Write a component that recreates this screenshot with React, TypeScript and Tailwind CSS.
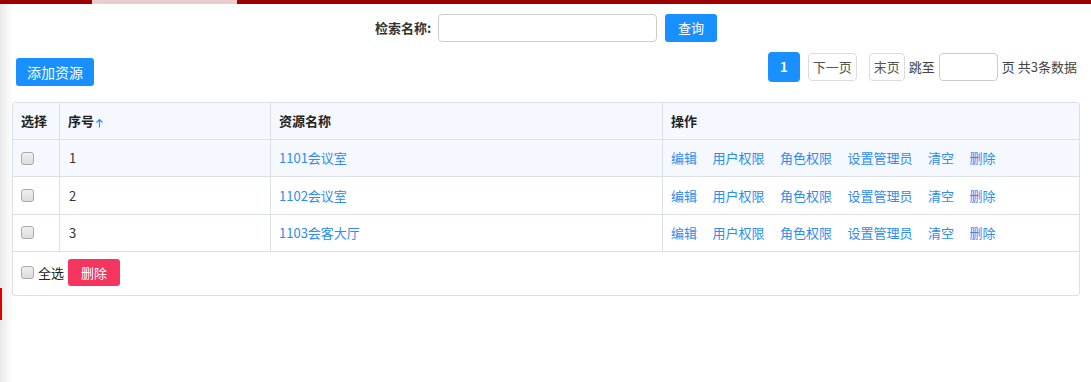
import React from 'react';

const rows = [
  { id: 1, name: '1101会议室' },
  { id: 2, name: '1102会议室' },
  { id: 3, name: '1103会客大厅' },
];

const actions = ['编辑', '用户权限', '角色权限', '设置管理员', '清空', '删除'];

function Box() {
  return (
    <span className="inline-block w-[13px] h-[13px] rounded-[3px] border border-[#a9a9a9] bg-gradient-to-b from-[#f0f0f0] to-[#dcdcdc] shrink-0" />
  );
}

function SortArrow() {
  return (
    <svg width="9" height="10" viewBox="0 0 9 10" className="ml-[1px] mt-[3px]">
      <path d="M4.5 1.5V9.5M1.5 4.5L4.5 1.5L7.5 4.5" fill="none" stroke="#2d8cf0" strokeWidth="1.2" />
    </svg>
  );
}

export default function App() {
  return (
    <div
      className="relative w-[1091px] h-[382px] bg-[linear-gradient(to_right,#e9e9e9,#ffffff_13px)] text-[13px] text-[#333]"
      style={{ fontFamily: '"Noto Sans CJK SC", "Noto Sans", sans-serif' }}
    >
      {/* top bar */}
      <div className="flex h-[4px]">
        <div className="w-[92px] bg-[#9c0000]" />
        <div className="w-[145px] bg-[#e9cccc]" />
        <div className="flex-1 bg-[#9c0000]" />
      </div>

      {/* search */}
      <div className="flex items-center justify-center gap-[7px] mt-[10px] h-[28px] pl-[1px]">
        <span className="font-bold text-[#333]">检索名称:</span>
        <input className="w-[219px] h-[28px] border border-[#cccccc] rounded-[4px] outline-none" />
        <button className="ml-[1px] w-[52px] h-[28px] bg-[#1890ff] text-white rounded-[3px] text-[13px]">查询</button>
      </div>

      {/* toolbar */}
      <div className="flex justify-between mt-[10px] h-[34px] pl-[16px] pr-[14px]">
        <button className="self-end w-[78px] h-[28px] bg-[#1890ff] text-white rounded-[3px] text-[14px]">添加资源</button>
        <div className="flex items-start">
          <span className="w-[32px] h-[30px] rounded-[4px] bg-[#1890ff] text-white font-bold flex items-center justify-center">1</span>
          <span className="ml-[8px] mt-[1px] w-[49px] h-[28px] border border-[#dcdcdc] rounded-[4px] flex items-center justify-center text-[#555]">下一页</span>
          <span className="ml-[12px] mt-[1px] w-[36px] h-[28px] border border-[#dcdcdc] rounded-[4px] flex items-center justify-center text-[#555]">末页</span>
          <span className="ml-[4px] h-[30px] flex items-center text-[#444]">跳至</span>
          <input className="ml-[4px] mt-[1px] w-[59px] h-[28px] border border-[#cccccc] rounded-[4px] outline-none" />
          <span className="ml-[4px] h-[30px] flex items-center text-[#444]">页</span>
          <span className="ml-[3px] h-[30px] flex items-center text-[#444]">共3条数据</span>
        </div>
      </div>

      {/* table */}
      <div className="ml-[12px] mt-[16px] w-[1068px] border border-[#dcdfe4] rounded-[3px] overflow-hidden">
        <div className="flex h-[37px] bg-[#f5f9ff] border-b border-[#dcdfe4] font-bold text-[#222]">
          <div className="w-[47px] border-r border-[#dcdfe4] pl-[8px] flex items-center">选择</div>
          <div className="w-[211px] border-r border-[#dcdfe4] pl-[8px] flex items-center">
            序号
            <SortArrow />
          </div>
          <div className="w-[392px] border-r border-[#dcdfe4] pl-[8px] flex items-center">资源名称</div>
          <div className="flex-1 pl-[8px] flex items-center">操作</div>
        </div>

        {rows.map((r, i) => (
          <div
            key={r.id}
            className={`flex h-[37.33px] border-b border-[#dcdfe4] ${i === 0 ? 'bg-[#f5f9ff]' : 'bg-white'}`}
          >
            <div className="w-[47px] border-r border-[#dcdfe4] pl-[8px] flex items-center">
              <Box />
            </div>
            <div className="w-[211px] border-r border-[#dcdfe4] pl-[9px] flex items-center text-[#333]">{r.id}</div>
            <div className="w-[392px] border-r border-[#dcdfe4] pl-[8px] flex items-center text-[#2d8cf0]">{r.name}</div>
            <div className="flex-1 pl-[8px] flex items-center gap-[15.5px] text-[#2d8cf0]">
              {actions.map((a) => (
                <span key={a}>{a}</span>
              ))}
            </div>
          </div>
        ))}

        <div className="h-[43px] flex items-center pl-[8px] pb-[1px]">
          <Box />
          <span className="ml-[4px] text-[#222]">全选</span>
          <button className="ml-[4px] w-[52px] h-[27px] rounded-[3px] bg-[#f4355f] text-white text-[13px]">删除</button>
        </div>
      </div>

      {/* side tab sliver */}
      <div className="absolute left-0 top-[288px] w-[2px] h-[32px] bg-[#e00000]" />
    </div>
  );
}
